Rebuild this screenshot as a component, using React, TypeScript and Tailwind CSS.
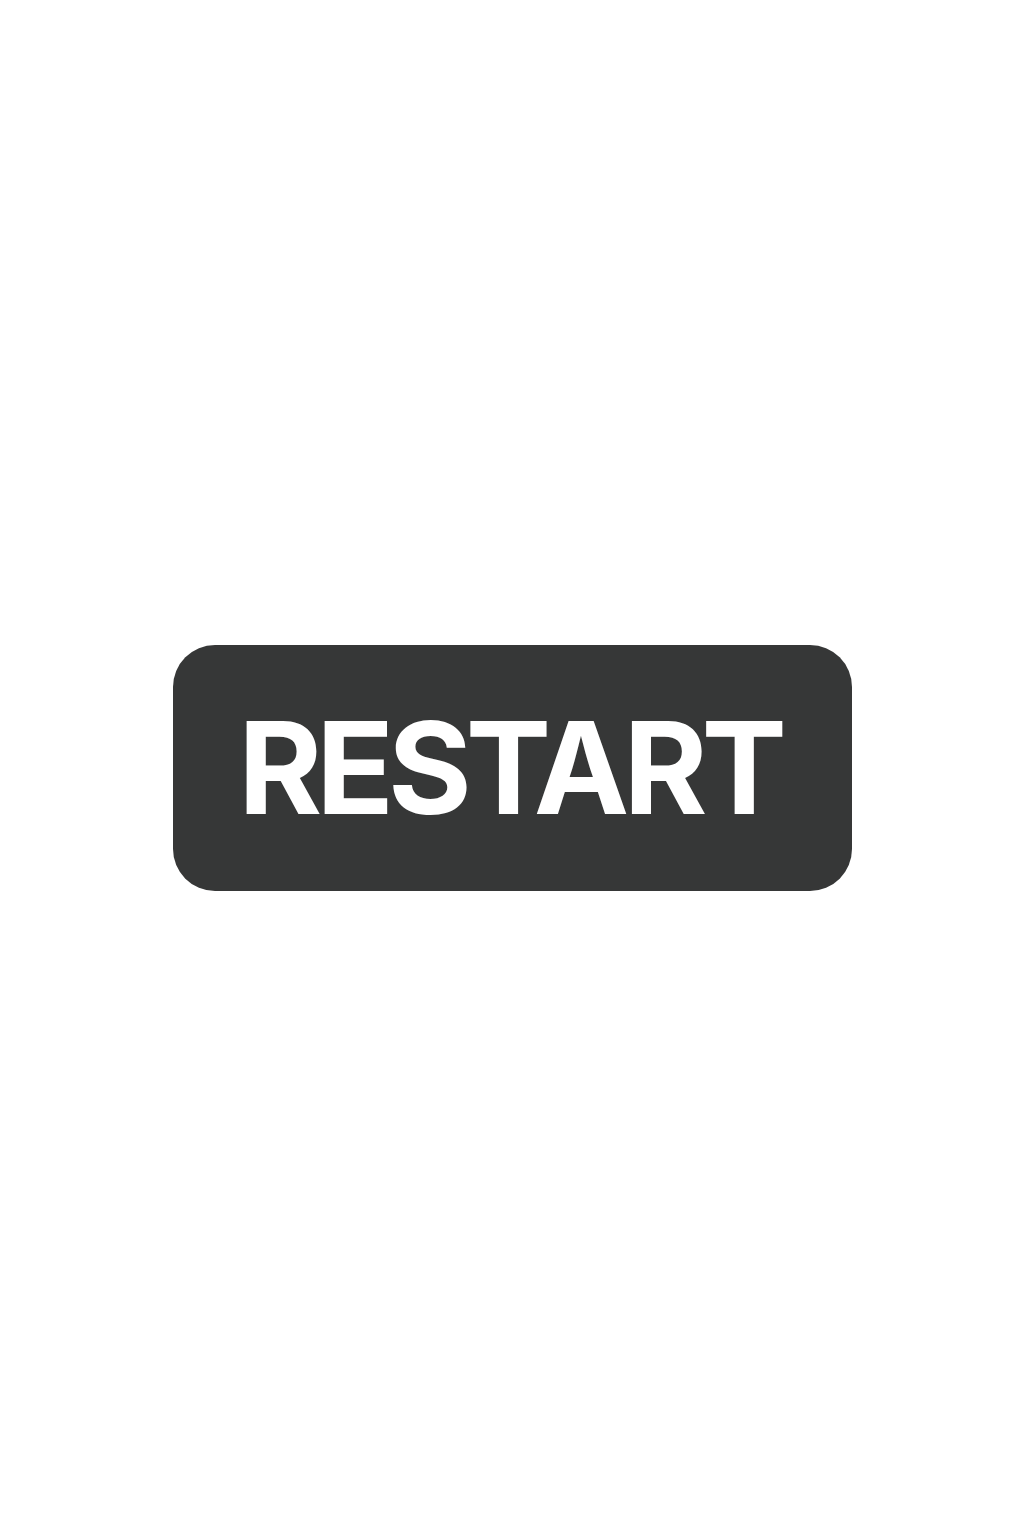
import React from "react";

export default function App() {
  return (
    <div className="flex min-h-[1536px] w-full items-center justify-center bg-white">
      <button
        type="button"
        className="flex h-[246px] w-[679px] items-center justify-center rounded-[42px] bg-[#363737] pr-[5px] text-[128px] font-[750] leading-none tracking-[-6px] text-white"
        style={{ fontFamily: "Inter, 'Liberation Sans', sans-serif" }}
      >
        RESTART
      </button>
    </div>
  );
}
